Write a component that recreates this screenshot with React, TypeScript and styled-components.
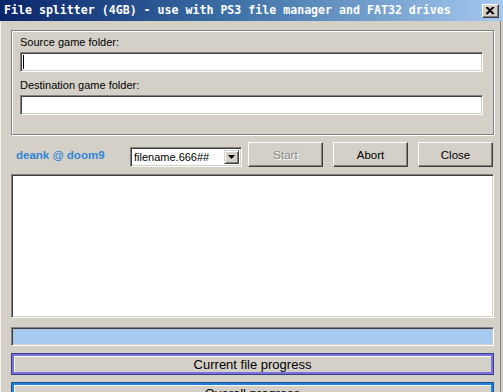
import React from 'react';
import styled, { createGlobalStyle } from 'styled-components';

const GlobalStyle = createGlobalStyle`
  html, body {
    margin: 0;
    padding: 0;
    background: #d4d0c8;
  }
  body {
    font-family: 'Liberation Sans', Arial, sans-serif;
    font-size: 11px;
    color: #000;
  }
  * {
    box-sizing: border-box;
  }
`

const Window = styled.div`
  width: 503px;
  height: 392px;
  overflow: hidden;
  background: #d4d0c8;
  display: flex;
  flex-direction: column;
`

const TitleBar = styled.div`
  flex: 0 0 21px;
  display: flex;
  align-items: center;
  justify-content: space-between;
  padding: 0 4px 0 4px;
  background: linear-gradient(to right, #0a246a 0%, #3a6ea5 45%, #a6caf0 100%);
`

const Title = styled.span`
  font-family: 'DejaVu Sans Mono', 'Liberation Mono', monospace;
  font-weight: bold;
  font-size: 11.6px;
  line-height: 1;
  color: #fff;
  white-space: pre;
  margin-top: 1px;
`

const CloseBox = styled.div`
  width: 17px;
  height: 14px;
  margin-top: 1px;
  background: #d4d0c8;
  border-top: 1px solid #fff;
  border-left: 1px solid #fff;
  border-right: 1px solid #404040;
  border-bottom: 1px solid #404040;
  box-shadow: inset -1px -1px 0 #808080;
  display: flex;
  align-items: center;
  justify-content: center;
`

const Body = styled.div`
  flex: 1 1 auto;
  display: flex;
  flex-direction: column;
  padding: 9px 6px 0 10px;
  margin-right: 2px;
  border-left: 1px solid #f4f3ef;
  border-right: 1px solid #808080;
`

const GroupBox = styled.div`
  height: 105px;
  display: flex;
  flex-direction: column;
  padding: 5px 10px 0 8px;
  border: 1px solid #808080;
  box-shadow: inset 1px 1px 0 #fff, 1px 1px 0 #fff;
`

const FieldLabel = styled.div<{ $gap: number }>`
  height: 13px;
  line-height: 13px;
  margin-top: ${p => p.$gap}px;
  margin-bottom: 3px;
  white-space: nowrap;
`

const Sunken = styled.div<{ $h: number; $bg?: string }>`
  position: relative;
  height: ${p => p.$h}px;
  background: ${p => p.$bg || '#fff'};
  border-top: 1px solid #808080;
  border-left: 1px solid #808080;
  border-right: 1px solid #fff;
  border-bottom: 1px solid #fff;
  box-shadow: inset 1px 1px 0 #404040, inset -1px -1px 0 #d4d0c8;
`

const Caret = styled.span`
  position: absolute;
  left: 2px;
  top: 2px;
  width: 1px;
  height: 14px;
  background: #000;
`

const Row = styled.div`
  height: 25px;
  margin-top: 7px;
  display: flex;
  align-items: center;
`

const Credit = styled.div`
  width: 119px;
  padding-left: 5px;
  font-weight: bold;
  font-size: 11.5px;
  color: #2f86d6;
  white-space: nowrap;
`

const Select = styled.div`
  width: 112px;
  height: 20px;
  margin-top: 4px;
  margin-right: 6px;
  display: flex;
  align-items: center;
  background: #fff;
  border-top: 1px solid #808080;
  border-left: 1px solid #808080;
  border-right: 1px solid #fff;
  border-bottom: 1px solid #fff;
  box-shadow: inset 1px 1px 0 #404040, inset -1px -1px 0 #d4d0c8;
  padding: 2px 2px 2px 3px;
`

const SelectText = styled.span`
  flex: 1;
  font-size: 11px;
  white-space: nowrap;
`

const DropButton = styled.div`
  width: 15px;
  height: 14px;
  background: #d4d0c8;
  border-top: 1px solid #d4d0c8;
  border-left: 1px solid #d4d0c8;
  border-right: 1px solid #404040;
  border-bottom: 1px solid #404040;
  box-shadow: inset 1px 1px 0 #fff, inset -1px -1px 0 #808080;
  display: flex;
  align-items: center;
  justify-content: center;
`

const Button = styled.div<{ $disabled?: boolean; $ml?: number }>`
  width: 75px;
  height: 25px;
  margin-left: ${p => p.$ml || 0}px;
  display: flex;
  align-items: center;
  justify-content: center;
  background: #d4d0c8;
  border-top: 1px solid #fff;
  border-left: 1px solid #fff;
  border-right: 1px solid #404040;
  border-bottom: 1px solid #404040;
  box-shadow: inset -1px -1px 0 #808080;
  font-size: 11.5px;
  color: ${p => (p.$disabled ? '#8a8780' : '#000')};
  text-shadow: ${p => (p.$disabled ? '1px 1px 0 #fff' : 'none')};
`

const LogArea = styled(Sunken)`
  margin-top: 7px;
`

const ProgressBar = styled(Sunken)`
  margin-top: 9px;
`

const ProgressLabel = styled.div<{ $edge: string; $ring: string; $mt: number }>`
  height: 22px;
  margin-top: ${p => p.$mt}px;
  flex: 0 0 auto;
  display: flex;
  align-items: center;
  justify-content: center;
  background: #d4d0c8;
  border: 1px solid ${p => p.$edge};
  box-shadow: inset 0 0 0 2px ${p => p.$ring}, inset 3px 3px 0 0 #fff;
  font-size: 13px;
  padding-top: 1px;
`

function CloseIcon() {
  return (
    <svg width="9" height="8" viewBox="0 0 9 8">
      <path d="M1 0 L8 7 M8 0 L1 7 M0 0 L7 7 M7 0 L0 7" stroke="#000" strokeWidth="1.3" fill="none"/>
    </svg>
  );
}

function ArrowIcon() {
  return (
    <svg width="7" height="4" viewBox="0 0 7 4">
      <path d="M0 0 H7 L3.5 4 Z" fill="#000"/>
    </svg>
  );
}

export default function App() {
  return (
    <Window>
      <GlobalStyle/>
      <TitleBar>
        <Title>File splitter (4GB) - use with PS3 file manager and FAT32 drives</Title>
        <CloseBox><CloseIcon/></CloseBox>
      </TitleBar>
      <Body>
        <GroupBox>
          <FieldLabel $gap={0}>Source game folder:</FieldLabel>
          <Sunken $h={20}><Caret/></Sunken>
          <FieldLabel $gap={7}>Destination game folder:</FieldLabel>
          <Sunken $h={20}/>
        </GroupBox>
        <Row>
          <Credit>deank @ doom9</Credit>
          <Select>
            <SelectText>filename.666##</SelectText>
            <DropButton><ArrowIcon/></DropButton>
          </Select>
          <Button $disabled>Start</Button>
          <Button $ml={10}>Abort</Button>
          <Button $ml={10}>Close</Button>
        </Row>
        <LogArea $h={144}/>
        <ProgressBar $h={19} $bg="#a6caf0"/>
        <ProgressLabel $mt={7} $edge="#3c3c86" $ring="#7474dc">Current file progress</ProgressLabel>
        <ProgressLabel $mt={7} $edge="#1d4f8a" $ring="#1c82de">Overall progress</ProgressLabel>
      </Body>
    </Window>
  );
}
